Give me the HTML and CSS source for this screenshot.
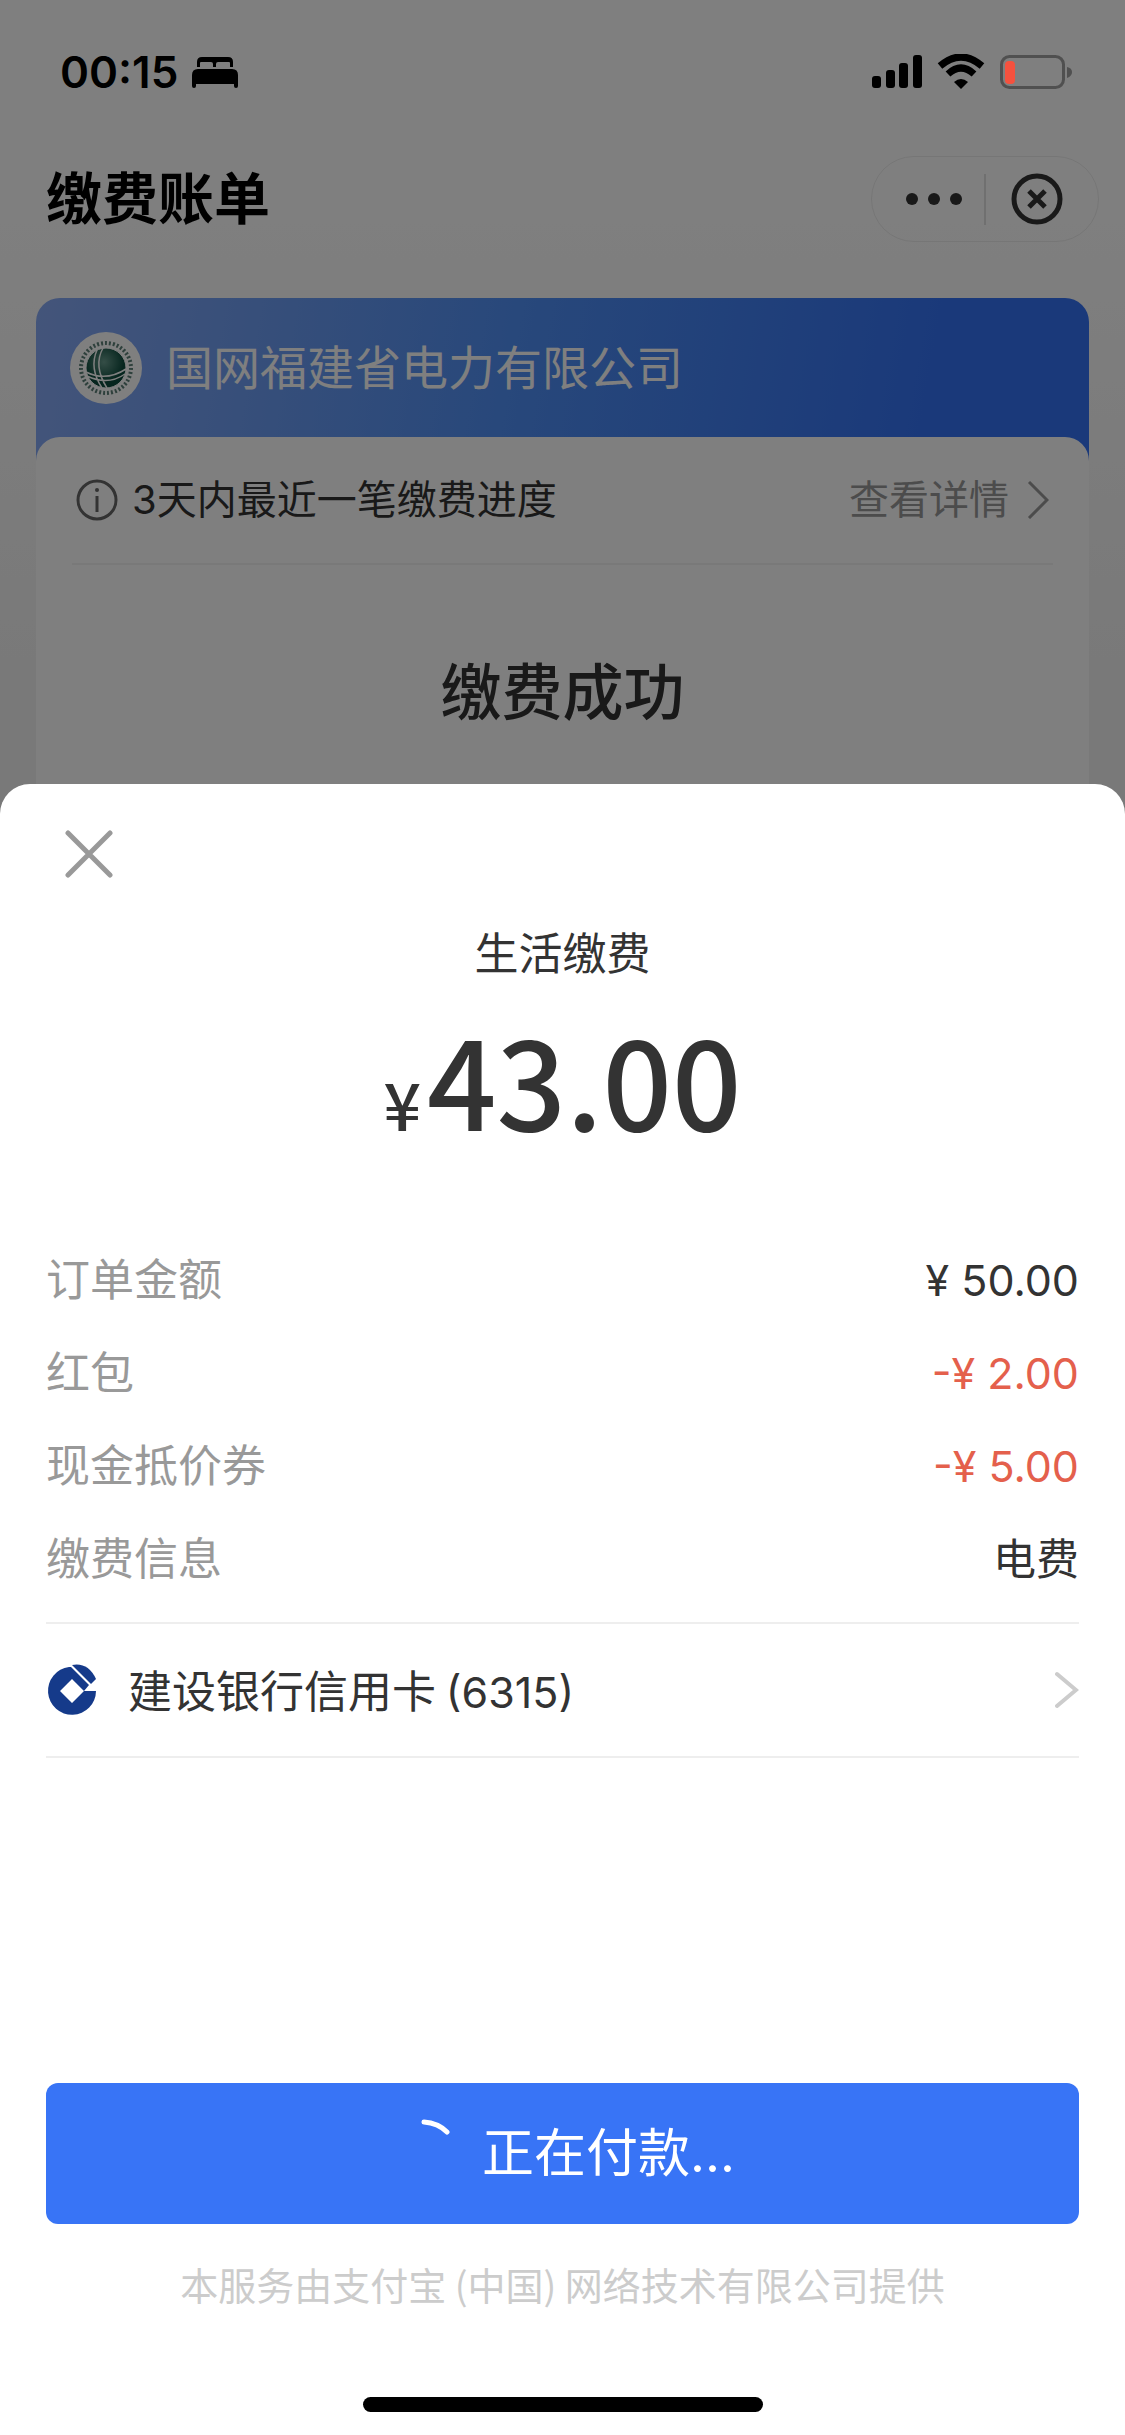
FILE: index.html
```html
<!DOCTYPE html>
<html lang="zh-CN">
<head>
<meta charset="utf-8">
<meta name="viewport" content="width=device-width, initial-scale=1">
<title>缴费账单</title>
<link rel="stylesheet" href="styles.css">
</head>
<body>
<div class="screen">
  <div class="page">
    <header class="status">
      <div class="status-left">
        <span class="time">00:15</span>
        <svg class="bed" width="46" height="32" viewBox="0 0 46 32" aria-hidden="true"><path d="M5 11V6Q5 1 10 1H36Q41 1 41 6V11H38V7Q38 6 37 6H26Q24 6 24 8V11H21V8Q21 6 19 6H9Q8 6 8 7V11Z"/><path d="M6 13H40Q46 13 46 19V30Q46 32 44 32Q42 32 42 30V28H4V30Q4 32 2 32Q0 32 0 30V19Q0 13 6 13Z"/></svg>
      </div>
      <div class="status-right">
        <svg width="50" height="34" viewBox="0 0 50 34" aria-hidden="true"><rect x="0" y="21" width="9" height="12" rx="3"/><rect x="14" y="15" width="9" height="18" rx="3"/><rect x="27" y="8" width="9" height="25" rx="3"/><rect x="41" y="0" width="9" height="33" rx="3"/></svg>
        <svg width="48" height="36" viewBox="0 0 48 36" aria-hidden="true"><path d="M24 35L17 28Q24 22 31 28Z"/><path d="M11 20Q24 8 37 20" fill="none" stroke="#000" stroke-width="7"/><path d="M3 12Q24 -6 45 12" fill="none" stroke="#000" stroke-width="7"/></svg>
        <svg width="73" height="36" viewBox="0 0 73 36" aria-hidden="true"><rect x="1.5" y="2.5" width="62" height="31" rx="8" fill="none" stroke="#505050" stroke-width="3"/><rect x="5" y="7" width="10" height="23" rx="4" fill="#f5513e"/><path d="M67 13Q72 14 72 18Q72 22 67 24Z" fill="#505050"/></svg>
      </div>
    </header>
    <nav class="nav">
      <h1 class="nav-title">缴费账单</h1>
      <div class="capsule">
        <button class="cap-btn" type="button" aria-label="更多"><svg width="58" height="16" viewBox="0 0 58 16"><circle cx="7" cy="8" r="6"/><circle cx="29" cy="8" r="6"/><circle cx="51" cy="8" r="6"/></svg></button>
        <button class="cap-btn cap-close" type="button" aria-label="关闭小程序"><svg width="54" height="54" viewBox="0 0 54 54" fill="none" stroke="#333" stroke-width="5"><circle cx="27" cy="27" r="23"/><path d="M19 19L35 35M35 19L19 35"/></svg></button>
      </div>
    </nav>
    <main class="bill">
      <div class="company">
        <svg class="grid-logo" width="72" height="72" viewBox="0 0 72 72" aria-hidden="true">
          <defs><radialGradient id="globe" cx="45%" cy="35%"><stop offset="0" stop-color="#6a9c8e"/><stop offset="1" stop-color="#0c4a3c"/></radialGradient></defs>
          <circle cx="36" cy="36" r="36" fill="#fff"/>
          <circle cx="36" cy="36" r="25" fill="none" stroke="#5d8078" stroke-width="4" stroke-dasharray="2 2"/>
          <circle cx="36" cy="36" r="20" fill="url(#globe)" stroke="#fff" stroke-width="1"/>
          <path d="M33 16Q23 34 37 56M27 18Q19 36 32 56M16 40Q36 50 56 37M17 44Q38 54 55 42" fill="none" stroke="#fff" stroke-width="1.5"/>
        </svg>
        <span class="company-name">国网福建省电力有限公司</span>
      </div>
      <section class="panel">
        <div class="progress">
          <svg width="42" height="42" viewBox="0 0 42 42" fill="none" stroke="#666" stroke-width="3" aria-hidden="true"><circle cx="21" cy="21" r="19"/><path d="M21 17V33"/><circle cx="21" cy="11" r="2" fill="#666" stroke="none"/></svg>
          <span class="progress-text">3天内最近一笔缴费进度</span>
          <a class="detail" href="#detail">查看详情<svg width="22" height="38" viewBox="0 0 22 38" fill="none" stroke="#999" stroke-width="3" aria-hidden="true"><path d="M2 1L20 19L2 37"/></svg></a>
        </div>
        <h2 class="result">缴费成功</h2>
      </section>
    </main>
  </div>
  <section class="sheet" role="dialog" aria-label="付款">
    <button class="close" type="button" aria-label="关闭"><svg width="48" height="48" viewBox="0 0 48 48" fill="none" stroke="#999" stroke-width="5" stroke-linecap="round"><path d="M3 3L45 45M45 3L3 45"/></svg></button>
    <p class="subject">生活缴费</p>
    <p class="amount"><span class="yen">¥</span><span>43.00</span></p>
    <dl class="rows">
      <div class="row"><dt>订单金额</dt><dd>¥ 50.00</dd></div>
      <div class="row"><dt>红包</dt><dd class="discount">-¥ 2.00</dd></div>
      <div class="row"><dt>现金抵价券</dt><dd class="discount">-¥ 5.00</dd></div>
      <div class="row"><dt>缴费信息</dt><dd>电费</dd></div>
    </dl>
    <button class="card" type="button">
      <svg width="52" height="54" viewBox="0 0 52 54" aria-hidden="true"><path fill="#153a8a" fill-rule="evenodd" d="M23 4A24 24 0 1 0 50 28H38L43 22L25 4ZM26 16L38 28L26 40L14 28Z"/><path fill="#153a8a" d="M26 2Q42 -1 50 16L45 21Z"/></svg>
      <span class="card-name">建设银行信用卡 <span class="card-number">(6315)</span></span>
      <svg width="24" height="38" viewBox="0 0 24 38" fill="none" stroke="#ccc" stroke-width="4" stroke-linecap="round" aria-hidden="true"><path d="M2 3L21 19L2 35"/></svg>
    </button>
    <button class="pay" type="button"><svg width="52" height="70" viewBox="0 0 52 70" fill="none" stroke="#fff" stroke-width="5" stroke-linecap="round" aria-hidden="true"><path d="M26 3Q40 4 49 13"/></svg>正在付款...</button>
    <p class="provider">本服务由支付宝 (中国) 网络技术有限公司提供</p>
    <div class="home"></div>
  </section>
</div>
</body>
</html>
```

FILE: styles.css
```css
* { box-sizing: border-box; }
body, h1, h2, p, dl, dd { margin: 0; }
body {
  font-family: Inter, "Noto Sans CJK SC", sans-serif;
  font-size: 44px;
  line-height: 60px;
  color: #333;
  background: #fff;
}
button {
  margin: 0;
  padding: 0;
  border: 0;
  background: none;
  font: inherit;
  color: inherit;
  display: flex;
  align-items: center;
  justify-content: center;
}
svg { display: block; flex: none; }

.screen { min-height: 100vh; display: flex; flex-direction: column; }
.page {
  position: relative;
  background: linear-gradient(#fff 180px, #f2f2f2 700px);
}
/* dimming layer between the bill and the payment sheet */
.page::after {
  content: "";
  position: absolute;
  inset: 0;
  background: rgba(0, 0, 0, .5);
}

.status {
  position: relative;
  z-index: 1;
  height: 144px;
  padding: 0 52px 0 60px;
  display: flex;
  align-items: center;
  justify-content: space-between;
}
.status-left { display: flex; align-items: center; gap: 14px; }
.status-right { display: flex; align-items: center; gap: 15px; }
.time { font-size: 44px; font-weight: 600; color: #000; }

.nav {
  height: 110px;
  padding: 0 26px 0 46px;
  display: flex;
  align-items: center;
  justify-content: space-between;
}
.nav-title { font-size: 56px; font-weight: 700; color: #000; }
.capsule {
  width: 228px;
  height: 86px;
  border: 1px solid #ededed;
  border-radius: 43px;
  display: flex;
  align-items: center;
}
.cap-btn { width: 112px; height: 51px; fill: #333; padding-left: 12px; }
.cap-close { border-left: 2px solid #e0e0e0; padding: 0 8px 0 0; }

.bill {
  margin: 44px 36px 0;
  border-radius: 24px 24px 0 0;
  background: linear-gradient(100deg, #88aaf4, #5090f6 45%, #3472f4 85%);
  background-size: 100% 180px;
  background-repeat: no-repeat;
}
.company {
  height: 139px;
  padding: 0 34px;
  display: flex;
  align-items: center;
  gap: 24px;
}
.company-name { font-size: 47px; color: #fff; }
.panel {
  height: 377px;
  padding: 0 36px;
  border-radius: 24px 24px 0 0;
  background: #fff;
}
.progress {
  height: 128px;
  padding: 0 4px;
  border-bottom: 2px solid #f2f2f2;
  display: flex;
  align-items: center;
  gap: 14px;
  font-size: 40px;
}
.progress-text { flex: 1; }
.detail {
  display: flex;
  align-items: center;
  gap: 18px;
  color: #999;
  text-decoration: none;
}
.result {
  margin-top: 98px;
  font-size: 61px;
  font-weight: 500;
  text-align: center;
}

.sheet {
  position: relative;
  z-index: 2;
  flex: 1;
  margin-top: -30px;
  padding: 46px 46px 23px;
  border-radius: 30px 30px 0 0;
  background: #fff;
  display: flex;
  flex-direction: column;
}
.close { align-self: flex-start; margin-left: 19px; }
.subject { margin-top: 46px; text-align: center; }
.amount {
  margin-top: 34px;
  display: flex;
  justify-content: center;
  align-items: baseline;
  gap: 6px;
  font-family: "Noto Sans CJK SC", sans-serif;
  font-size: 122px;
  line-height: 120px;
  font-weight: 500;
}
.yen { font-size: 66px; }
.rows { margin-top: 88px; }
.row {
  height: 60px;
  margin-bottom: 33px;
  display: flex;
  justify-content: space-between;
}
.row dt { color: #999; }
.row dd { font-size: 43px; }
.row .discount { color: #e4604c; }
.card {
  height: 136px;
  border-top: 2px solid #eee;
  border-bottom: 2px solid #eee;
  text-align: left;
}
.card-name {
  flex: 1;
  margin-left: 30px;
  font-family: "Noto Sans CJK SC", sans-serif;
}
.card-number { font-family: Inter, sans-serif; font-size: 43px; }
.pay {
  height: 141px;
  margin-top: auto;
  padding-left: 8px;
  border-radius: 12px;
  background: #3874f6;
  color: #fff;
  font-size: 52px;
  gap: 32px;
}
.provider {
  margin-top: 30px;
  font-family: "Noto Sans CJK SC", sans-serif;
  font-size: 38px;
  text-align: center;
  color: #ccc;
}
.home {
  width: 400px;
  height: 15px;
  margin: 83px auto 0;
  border-radius: 8px;
  background: #000;
}
```
